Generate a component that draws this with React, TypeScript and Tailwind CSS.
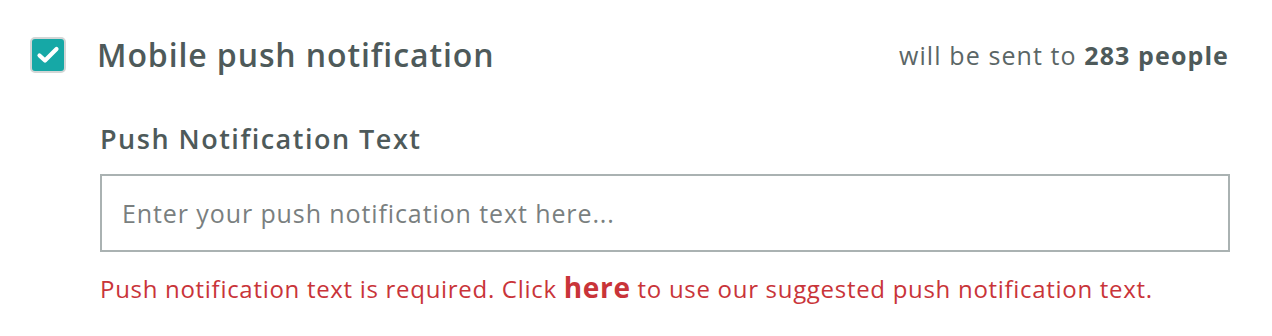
import { useState } from "react";

export default function App() {
  const [text, setText] = useState("");

  return (
    <div className="h-[336px] w-[1272px] bg-white font-['Open_Sans',sans-serif]">
      <div className="flex items-center justify-between pl-[30px] pr-[43px] pt-[37px]">
        <div className="flex items-center">
          <div className="flex h-[36px] w-[36px] items-center justify-center rounded-[5px] border-2 border-[#d3d6d6] bg-[#16a8a6]">
            <svg width="24" height="20" viewBox="0 0 24 20" fill="none">
              <path
                d="M3.5 10.5 L9 15.5 L20.5 4"
                stroke="white"
                strokeWidth="4.2"
                strokeLinecap="round"
                strokeLinejoin="round"
              />
            </svg>
          </div>
          <span className="ml-[31px] text-[32px] font-semibold leading-none tracking-[0.9px] text-[#4e5a5a]">
            Mobile push notification
          </span>
        </div>
        <span className="text-[25px] leading-none tracking-[1.1px] text-[#5b6666]">
          will be sent to <span className="font-bold text-[#4e5a5a]">283 people</span>
        </span>
      </div>

      <div className="pl-[100px] pr-[42px] pt-[52px]">
        <label className="block text-[27px] font-semibold leading-none tracking-[1.5px] text-[#4e5a5a]">
          Push Notification Text
        </label>
        <input
          value={text}
          onChange={(e) => setText(e.target.value)}
          placeholder="Enter your push notification text here..."
          className="mt-[22px] block h-[78px] w-full border-2 border-[#aab2b2] px-[20px] text-[25px] tracking-[0.9px] text-[#4e5a5a] outline-none placeholder:text-[#7a7f7f]"
        />
        <p className="mt-[21px] text-[24px] leading-none tracking-[0.7px] text-[#c93439]">
          Push notification text is required. Click{" "}
          <a href="#" className="text-[28px] font-bold">
            here
          </a>{" "}
          to use our suggested push notification text.
        </p>
      </div>
    </div>
  );
}
